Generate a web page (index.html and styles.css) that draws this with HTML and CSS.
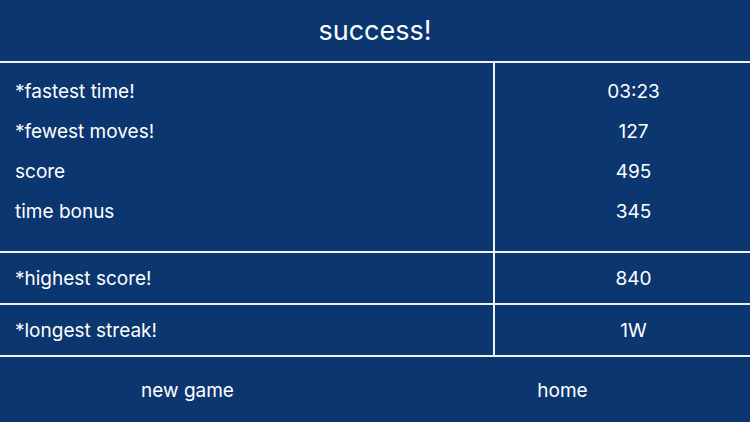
FILE: index.html
```html
<!DOCTYPE html>
<html>
<head>
<meta charset="utf-8">
<link rel="stylesheet" href="styles.css">
</head>
<body>
<div class="screen">
  <header class="title">success!</header>
  <section class="block stats">
    <div class="labels">
      <div class="row">*fastest time!</div>
      <div class="row">*fewest moves!</div>
      <div class="row">score</div>
      <div class="row">time bonus</div>
    </div>
    <div class="values">
      <div class="row">03:23</div>
      <div class="row">127</div>
      <div class="row">495</div>
      <div class="row">345</div>
    </div>
  </section>
  <section class="block single">
    <div class="labels"><div class="row">*highest score!</div></div>
    <div class="values"><div class="row">840</div></div>
  </section>
  <section class="block single">
    <div class="labels"><div class="row">*longest streak!</div></div>
    <div class="values"><div class="row">1W</div></div>
  </section>
  <footer class="actions">
    <div class="action">new game</div>
    <div class="action">home</div>
  </footer>
</div>
</body>
</html>
```
FILE: styles.css
```css
html, body {
  margin: 0;
  padding: 0;
  background: #0b3670;
}
.screen {
  width: 750px;
  height: 422px;
  display: flex;
  flex-direction: column;
  font-family: Inter, "Noto Sans", sans-serif;
  color: #ffffff;
  background: #0b3670;
}
.title {
  height: 63px;
  flex: none;
  display: flex;
  align-items: center;
  justify-content: center;
  font-size: 27px;
  padding-bottom: 1px;
  box-sizing: border-box;
  border-bottom: 2px solid #eef1f6;
}
.block {
  display: flex;
  flex: none;
  box-sizing: border-box;
  border-bottom: 2px solid #eef1f6;
}
.stats {
  height: 190px;
}
.single {
  height: 52px;
}
.labels {
  width: 495px;
  border-right: 2px solid #eef1f6;
  padding-left: 15px;
  box-sizing: border-box;
  display: flex;
  flex-direction: column;
  justify-content: center;
}
.values {
  flex: 1;
  padding-left: 22px;
  display: flex;
  flex-direction: column;
  justify-content: center;
  align-items: center;
}
.stats .labels,
.stats .values {
  justify-content: flex-start;
  padding-top: 8px;
}
.row {
  height: 38px;
  padding-top: 2px;
  line-height: 38px;
  font-size: 19px;
}
.actions {
  flex: 1;
  display: flex;
}
.action {
  flex: 1;
  display: flex;
  align-items: center;
  justify-content: center;
  font-size: 19px;
  padding-top: 1px;
}
```
